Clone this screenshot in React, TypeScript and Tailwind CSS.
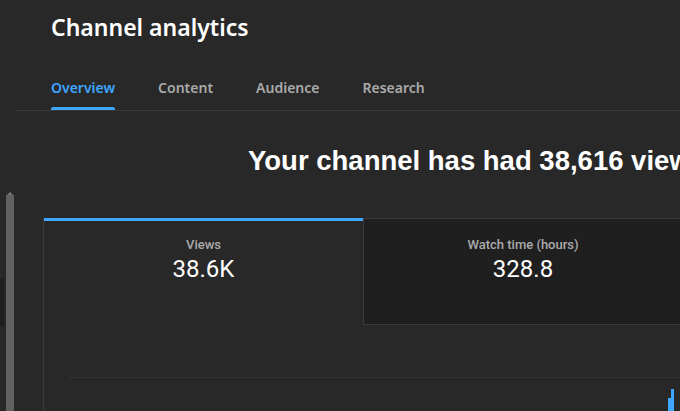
const tabs = ['Overview', 'Content', 'Audience', 'Research']

function StatTab({ label, value, active }: { label: string; value: string; active?: boolean }) {
  return (
    <div
      className={
        active
          ? 'w-[319px] shrink-0 h-[107px] border-t-[3px] border-[#3ea6ff] flex flex-col items-center pt-[16px]'
          : 'w-[319px] shrink-0 h-[107px] border-t border-l border-b border-[#3a3a3a] bg-[#1f1f1f] flex flex-col items-center pt-[18px]'
      }
    >
      <div className="text-[13px] font-medium text-[#aaaaaa] leading-[16px]">{label}</div>
      <div className="text-[24px] text-white leading-[28px] mt-[2px]">{value}</div>
    </div>
  )
}

export default function App() {
  return (
    <div className="w-[680px] h-[411px] overflow-hidden bg-[#282828] flex flex-col font-['Roboto',sans-serif]">
      {/* header */}
      <div className="pl-[16px]">
        <div className="pl-[35px] pt-[11px] h-[64px]">
          <h1 className="font-['Noto_Sans',sans-serif] font-semibold text-[23px] leading-[32px] text-white">Channel analytics</h1>
        </div>
        <div className="flex gap-[43px] pl-[35px] border-b border-[#3a3a3a] font-['Noto_Sans',sans-serif]">
          {tabs.map((t, i) => (
            <div key={t} className="relative h-[46px] flex items-center">
              <span className={i === 0 ? 'text-[14px] font-semibold text-[#3ea6ff]' : 'text-[14px] font-semibold text-[#aaaaaa]'}>{t}</span>
              {i === 0 && <div className="absolute left-0 right-0 bottom-0 h-[3px] rounded-t-[2px] bg-[#3ea6ff]" />}
            </div>
          ))}
        </div>
      </div>

      {/* body */}
      <div className="flex flex-1 min-h-0">
        <div className="w-[43px] shrink-0 relative">
          <div className="absolute left-0 top-[168px] w-[4px] h-[48px] bg-[#1e1e1e]" />
          <div className="ml-[6px] mt-[81px] w-[8px] h-full flex flex-col items-center">
            <div className="w-0 h-0 border-l-[3px] border-r-[3px] border-b-[3px] border-l-transparent border-r-transparent border-b-[#777777]" />
            <div className="w-[8px] flex-1 bg-[#606060]" />
          </div>
        </div>

        <div className="flex-1 min-w-0">
          <div className="h-[107px] flex items-center pl-[205px] pb-[8px] overflow-hidden">
            <h2 className="whitespace-nowrap font-['Liberation_Sans',Arial,sans-serif] text-[27.5px] font-bold text-white">
              Your channel has had 38,616 views in the last 28 days
            </h2>
          </div>
          <div className="border-l border-[#3a3a3a] h-[200px]">
            <div className="flex">
              <StatTab label="Views" value="38.6K" active />
              <StatTab label="Watch time (hours)" value="328.8" />
            </div>
            <div className="ml-[25px] mt-[52px] h-px bg-[#333333]" />
            <div className="flex items-end gap-0 pl-[624px] h-[34px]">
              <div className="w-[3px] h-[14px] bg-[#3ea6ff]" />
              <div className="w-[3px] h-[23px] bg-[#3ea6ff]" />
            </div>
          </div>
        </div>
      </div>
    </div>
  )
}
